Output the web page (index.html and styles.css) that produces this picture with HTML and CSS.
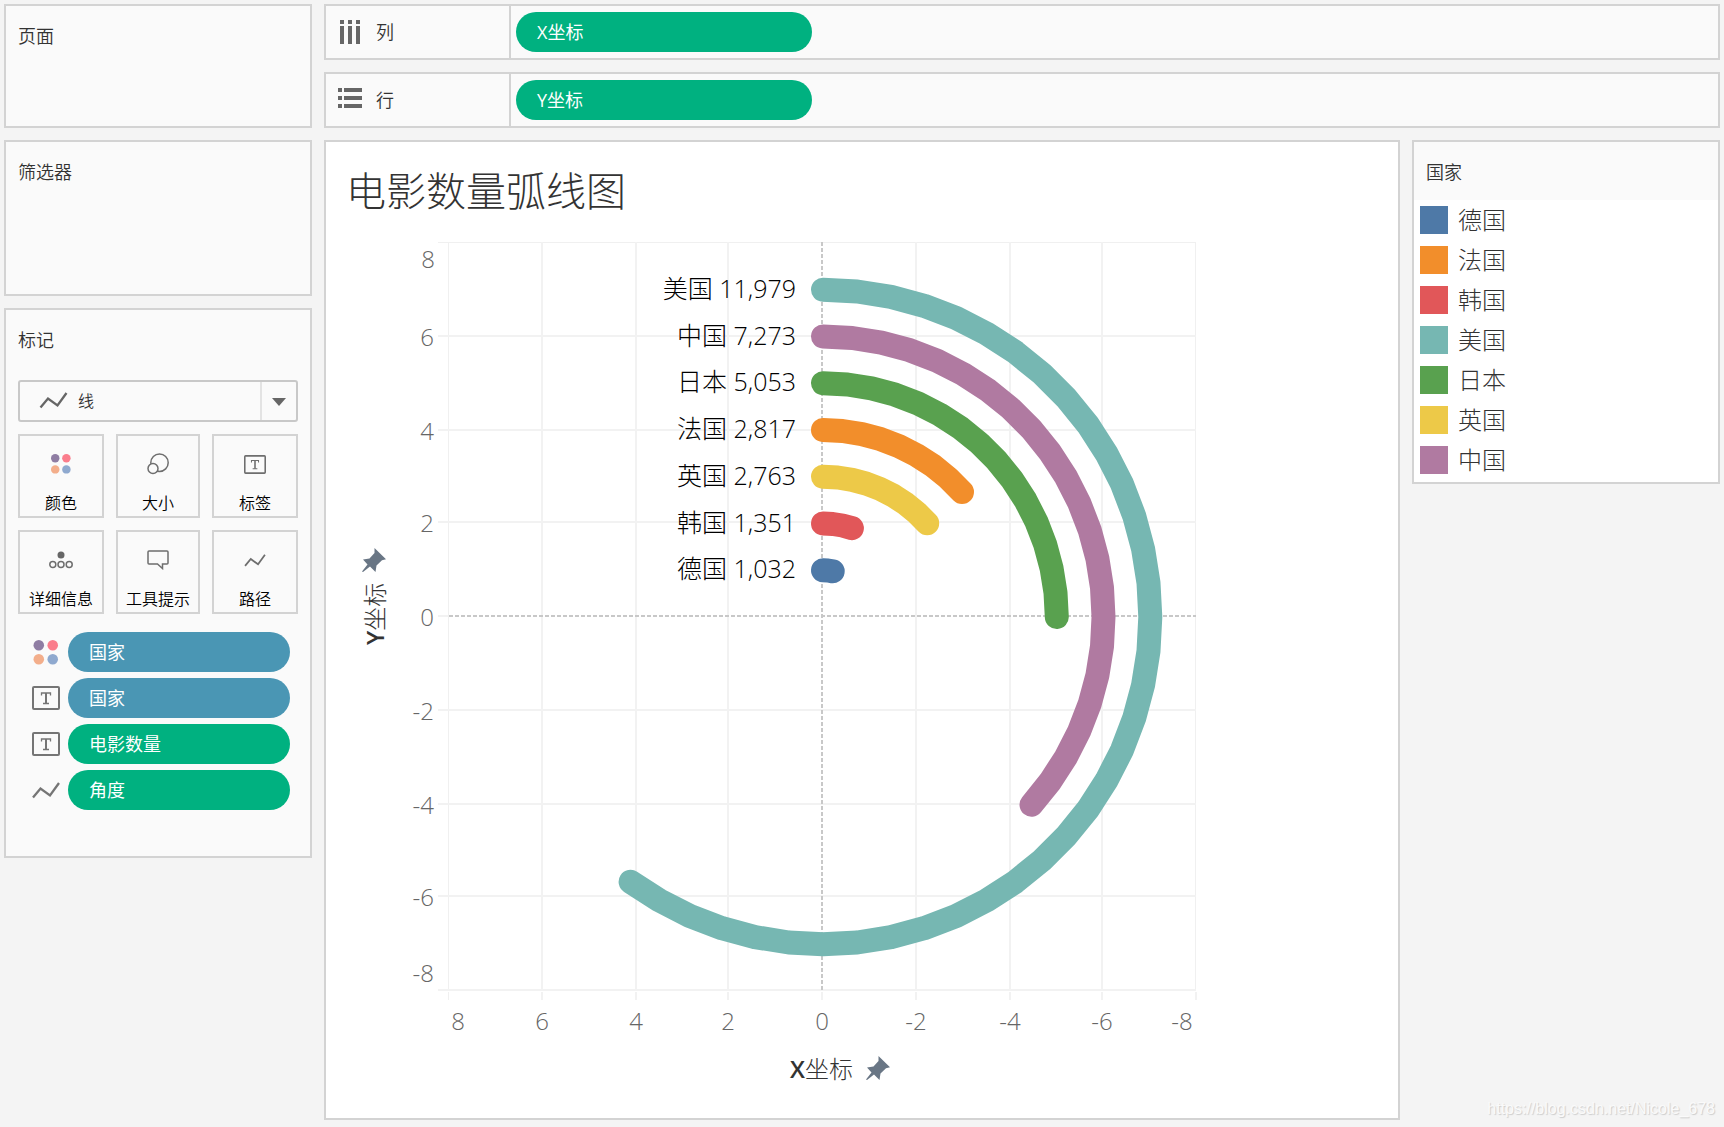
FILE: index.html
```html
<!DOCTYPE html>
<html lang="zh-CN">
<head>
<meta charset="utf-8">
<meta name="viewport" content="width=device-width, initial-scale=1">
<title>电影数量弧线图</title>
<link rel="stylesheet" href="styles.css">
</head>
<body>
<svg class="symbols" aria-hidden="true">
  <symbol id="i-line" viewBox="0 0 28 17"><path d="M1 15.500L8.500 6.500L18 13.500L27 1" fill="none" stroke="currentColor" stroke-width="2.300"/></symbol>
  <symbol id="i-color" viewBox="0 0 26 26"><circle cx="5.500" cy="5.500" r="5.500" fill="#8f7da3"/><circle cx="20" cy="5.500" r="5.500" fill="#fa7d8c"/><circle cx="5.500" cy="20" r="5.500" fill="#f3ae8b"/><circle cx="20" cy="20" r="5.500" fill="#8fa9cf"/></symbol>
  <symbol id="i-text" viewBox="0 0 28 24"><rect x="1" y="1" width="26" height="22" rx="1" fill="none" stroke="currentColor" stroke-width="2"/><path d="M9.500 9.500V7H18.500V9.500M11 17.500H17" fill="none" stroke="currentColor" stroke-width="1.300"/><path d="M14 7V17.500" fill="none" stroke="currentColor" stroke-width="2"/></symbol>
  <symbol id="i-pin" viewBox="0 0 24 24"><path d="M12.500 0L24 11.300L20 12.300L14.500 17.500L13.500 24L8 18.500L1 24L0 23.500L5.500 16.500L1 11.500L7.500 10.500L12.500 5Z" fill="#697685"/></symbol>
</svg>
<div class="workspace">
  <aside class="cards">
    <section class="panel card-pages"><h2 class="card-title">页面</h2></section>
    <section class="panel card-filters"><h2 class="card-title">筛选器</h2></section>
    <section class="panel card-marks">
      <h2 class="card-title">标记</h2>
      <div class="mark-type">
        <svg class="mark-type-icon"><use href="#i-line"/></svg>
        <select class="mark-select" aria-label="标记类型"><option>线</option></select>
        <svg class="mark-arrow" viewBox="0 0 14 8"><path d="M0 0H14L7 8Z" fill="#666"/></svg>
      </div>
      <div class="mark-buttons">
        <button class="mark-button" type="button"><svg width="20" height="20"><use href="#i-color"/></svg><span>颜色</span></button>
        <button class="mark-button" type="button"><svg width="22" height="22" viewBox="0 0 22 22"><g fill="#fafafa" stroke="#6e6e6e" stroke-width="1.500"><circle cx="12.500" cy="9.700" r="8.700"/><circle cx="6" cy="15.500" r="5"/></g></svg><span>大小</span></button>
        <button class="mark-button" type="button"><svg width="22" height="19"><use href="#i-text"/></svg><span>标签</span></button>
        <button class="mark-button" type="button"><svg width="24" height="18" viewBox="0 0 24 18"><circle cx="12" cy="4" r="3.500" fill="#666"/><g fill="none" stroke="#6e6e6e" stroke-width="1.500"><circle cx="3.800" cy="13.500" r="3"/><circle cx="12" cy="13.500" r="3"/><circle cx="20.200" cy="13.500" r="3"/></g></svg><span>详细信息</span></button>
        <button class="mark-button" type="button"><svg width="22" height="20" viewBox="0 0 22 20"><path d="M2 1H20Q21 1 21 2V13Q21 14 20 14H15.500V18.500L10.500 14H2Q1 14 1 13V2Q1 1 2 1Z" fill="none" stroke="#6e6e6e" stroke-width="1.500"/></svg><span>工具提示</span></button>
        <button class="mark-button" type="button"><svg width="22" height="13"><use href="#i-line"/></svg><span>路径</span></button>
      </div>
      <ul class="mark-fields">
        <li><svg width="28" height="25"><use href="#i-color"/></svg><button class="pill pill-blue" type="button">国家</button></li>
        <li><svg width="28" height="24"><use href="#i-text"/></svg><button class="pill pill-blue" type="button">国家</button></li>
        <li><svg width="28" height="24"><use href="#i-text"/></svg><button class="pill pill-green" type="button">电影数量</button></li>
        <li><svg width="28" height="17"><use href="#i-line"/></svg><button class="pill pill-green" type="button">角度</button></li>
      </ul>
    </section>
  </aside>

  <main class="main">
    <section class="panel shelf">
      <h2 class="shelf-label"><svg width="24" height="24" viewBox="0 0 24 24"><path fill="#666" d="M2 0h4v4h-4zM10 0h4v4h-4zM18 0h4v4h-4zM2 6h4v18h-4zM10 6h4v18h-4zM18 6h4v18h-4z"/></svg>列</h2>
      <div class="shelf-body"><button class="pill pill-green pill-shelf" type="button">X坐标</button></div>
    </section>
    <section class="panel shelf">
      <h2 class="shelf-label"><svg width="24" height="24" viewBox="0 0 24 24"><path fill="#666" d="M0 0h4v4h-4zM0 8h4v4h-4zM0 16h4v4h-4zM6 0h18v4h-18zM6 8h18v4h-18zM6 16h18v4h-18z"/></svg>行</h2>
      <div class="shelf-body"><button class="pill pill-green pill-shelf" type="button">Y坐标</button></div>
    </section>
    <div class="view">
      <section class="panel sheet">
        <h1 class="sheet-title">电影数量弧线图</h1>
        <svg class="chart" width="880" height="888" viewBox="-496 -386 880 888">
          <g class="frame">
            <path d="M-384 -373.500H374M-373.500 -374V374M373.500 -374V374"/>
          </g>
          <g class="grid">
            <path d="M-280 -374V374M-186 -374V374M-94 -374V374M94 -374V374M188 -374V374M280 -374V374"/>
            <path d="M-384 -280H374M-384 -186H374M-384 -94H374M-384 0H-374M-384 94H374M-384 188H374M-384 280H374M-384 374H374"/>
            <path d="M-280 376V384M-186 376V384M-94 376V384M0 376V384M94 376V384M188 376V384M280 376V384M374 376V384"/>
          </g>
          <path class="frame" d="M-373.500 376V384"/>
          <path class="zero" d="M-373 0H374M0 -374V374"/>
          <g class="tick tick-y">
            <text x="-387" y="-348">8</text><text x="-388" y="-270">6</text><text x="-388" y="-176">4</text><text x="-388" y="-84">2</text><text x="-388" y="10">0</text><text x="-388" y="104">-2</text><text x="-388" y="198">-4</text><text x="-388" y="290">-6</text><text x="-388" y="366">-8</text>
          </g>
          <g class="tick tick-x">
            <text x="-364" y="414">8</text><text x="-280" y="414">6</text><text x="-186" y="414">4</text><text x="-94" y="414">2</text><text x="0" y="414">0</text><text x="94" y="414">-2</text><text x="188" y="414">-4</text><text x="280" y="414">-6</text><text x="360" y="414">-8</text>
          </g>
          <g id="arcs"></g>
          <g class="axis-title">
            <text x="-32" y="462"><tspan class="strong">X</tspan>坐标</text>
            <text transform="translate(-438 29) rotate(-90)"><tspan class="strong">Y</tspan>坐标</text>
          </g>
          <use href="#i-pin" x="44" y="440" width="24" height="24"/>
          <use href="#i-pin" x="-460" y="-68" width="24" height="24"/>
        </svg>
      </section>
      <section class="panel legend">
        <h2 class="card-title">国家</h2>
        <ul class="legend-list">
          <li><i class="swatch de"></i>德国</li>
          <li><i class="swatch fr"></i>法国</li>
          <li><i class="swatch kr"></i>韩国</li>
          <li><i class="swatch us"></i>美国</li>
          <li><i class="swatch jp"></i>日本</li>
          <li><i class="swatch gb"></i>英国</li>
          <li><i class="swatch cn"></i>中国</li>
        </ul>
      </section>
    </div>
  </main>
</div>
<div class="watermark">https://blog.csdn.net/Nicole_678</div>
<script src="chart.js"></script>
</body>
</html>
```
FILE: chart.js
```js
// Each arc starts at twelve o'clock and is drawn in six-degree steps.
const UNIT = 46.75;
const STEP = Math.PI / 30;
const series = [
  { name: '美国', value: '11,979', radius: 7, steps: 36, color: '#76b7b2' },
  { name: '中国', value: '7,273', radius: 6, steps: 22, color: '#b07aa1' },
  { name: '日本', value: '5,053', radius: 5, steps: 15, color: '#59a14f' },
  { name: '法国', value: '2,817', radius: 4, steps: 8, color: '#f28e2b' },
  { name: '英国', value: '2,763', radius: 3, steps: 8, color: '#edc948' },
  { name: '韩国', value: '1,351', radius: 2, steps: 3, color: '#e15759' },
  { name: '德国', value: '1,032', radius: 1, steps: 2, color: '#4e79a7' }
];
const arcs = document.getElementById('arcs');
const make = (tag, attrs) => {
  const el = document.createElementNS('http://www.w3.org/2000/svg', tag);
  for (const key in attrs) el.setAttribute(key, attrs[key]);
  arcs.appendChild(el);
  return el;
};
for (const s of series) {
  const r = s.radius * UNIT;
  const points = [];
  for (let i = 0; i <= s.steps; i++) {
    points.push((1 + r * Math.sin(i * STEP)).toFixed(1) + ',' + (1 - r * Math.cos(i * STEP)).toFixed(1));
  }
  make('polyline', { class: 'arc', points: points.join(' '), stroke: s.color });
  make('text', { class: 'arc-label', x: -26, y: Math.round(9 - r) }).textContent = s.name + ' ' + s.value;
}
```
FILE: styles.css
```css
* { box-sizing: border-box; }

body {
  margin: 0;
  position: relative;
  min-height: 100vh;
  background: #f4f4f4;
  color: #333;
  font-family: "Open Sans", "Noto Sans CJK SC", sans-serif;
  font-size: 18px;
  line-height: 24px;
  font-weight: 300;
}

h1, h2, ul { margin: 0; padding: 0; font-weight: inherit; font-size: inherit; }
ul { list-style: none; }
button, select { font: inherit; margin: 0; }
svg { display: block; flex: none; }
.symbols { position: absolute; width: 0; height: 0; }

.workspace {
  display: grid;
  grid-template-columns: 308px minmax(0, 1fr);
  gap: 12px;
  padding: 4px;
}
.cards, .main { display: flex; flex-direction: column; gap: 12px; }
.panel { background: #fafafa; border: 2px solid #d3d3d3; }

/* Left-hand cards */
.card-title { padding: 18px 12px 16px; font-weight: 350; }
.card-pages { height: 124px; }
.card-filters { height: 156px; }
.card-marks { padding-bottom: 46px; }
.mark-type { position: relative; margin: 12px 12px 0; color: #666; }
.mark-select {
  display: block;
  width: 100%;
  height: 42px;
  padding: 0 58px;
  appearance: none;
  background: linear-gradient(#e3e3e3, #e3e3e3) right 34px top 0 / 2px 100% no-repeat #fafafa;
  border: 2px solid #c8c8c8;
  border-radius: 3px;
  color: #333;
  font-size: 16px;
  font-weight: 350;
}
.mark-type-icon { position: absolute; left: 21px; top: 12px; width: 29px; height: 17px; }
.mark-arrow { position: absolute; right: 12px; top: 18px; width: 14px; height: 8px; }

.mark-buttons {
  display: grid;
  grid-template-columns: 43fr 42fr 43fr;
  gap: 12px;
  margin: 12px 12px 0;
}
.mark-button {
  display: grid;
  grid-template-rows: 56px 22px;
  align-content: start;
  justify-items: center;
  align-items: center;
  height: 84px;
  padding: 0;
  background: #fafafa;
  border: 2px solid #d3d3d3;
  color: #6e6e6e;
  font-size: 16px;
  font-weight: 350;
}
.mark-button span { color: #000; white-space: nowrap; }

.mark-fields {
  display: flex;
  flex-direction: column;
  gap: 6px;
  margin: 18px 20px 0 26px;
  color: #757575;
}
.mark-fields li { display: flex; align-items: center; gap: 8px; }
.pill {
  flex: 1;
  height: 40px;
  padding: 0 21px;
  border: 0;
  border-radius: 20px;
  color: #fff;
  font-weight: 400;
  text-align: left;
}
.pill-blue { background: #4a96b4; }
.pill-green { background: #00b180; }

/* Shelves */
.shelf { display: flex; height: 56px; }
.shelf-label {
  display: flex;
  align-items: center;
  gap: 14px;
  width: 185px;
  padding-left: 12px;
  border-right: 2px solid #d3d3d3;
  font-weight: 350;
}
.shelf-body { display: flex; align-items: center; flex: 1; padding: 0 5px; }
.pill-shelf { flex: 0 1 296px; }

/* Worksheet */
.view { display: flex; align-items: flex-start; gap: 12px; }
.sheet { flex: 1; min-width: 0; background: #fff; }
.sheet-title { height: 88px; padding: 21px 20px; font-size: 40px; line-height: 56px; }
.chart { max-width: 100%; }
.frame { fill: none; stroke: #f0f0f0; stroke-width: 1; }
.grid { fill: none; stroke: #f2f2f2; stroke-width: 2; }
.zero { fill: none; stroke: #c8c8c8; stroke-width: 2; stroke-dasharray: 4 2; }
.arc { fill: none; stroke-width: 24; stroke-linecap: round; stroke-linejoin: round; }
.arc-label { fill: #000; font-size: 25px; text-anchor: end; }
.tick { fill: #666; font-size: 24px; }
.tick-y { text-anchor: end; }
.tick-x { text-anchor: middle; }
.axis-title { fill: #333; font-size: 24px; }
.strong { font-weight: 600; }

/* Legend */
.legend { flex: 0 0 308px; background: #fff; }
.legend .card-title { background: #fafafa; }
.legend-list { display: grid; gap: 12px; padding: 6px 6px 8px; color: #333; font-size: 24px; line-height: 28px; }
.legend-list li { display: flex; gap: 10px; }
.swatch { width: 28px; height: 28px; }
.de { background: #4e79a7; }
.fr { background: #f28e2b; }
.kr { background: #e15759; }
.us { background: #76b7b2; }
.jp { background: #59a14f; }
.gb { background: #edc948; }
.cn { background: #b07aa1; }

.watermark {
  position: absolute;
  right: 9px;
  bottom: 6px;
  color: #fafafa;
  font-family: "Liberation Sans", sans-serif;
  font-size: 16px;
  font-weight: 400;
  text-shadow: 1px 1px 1px #ccc;
}
```
